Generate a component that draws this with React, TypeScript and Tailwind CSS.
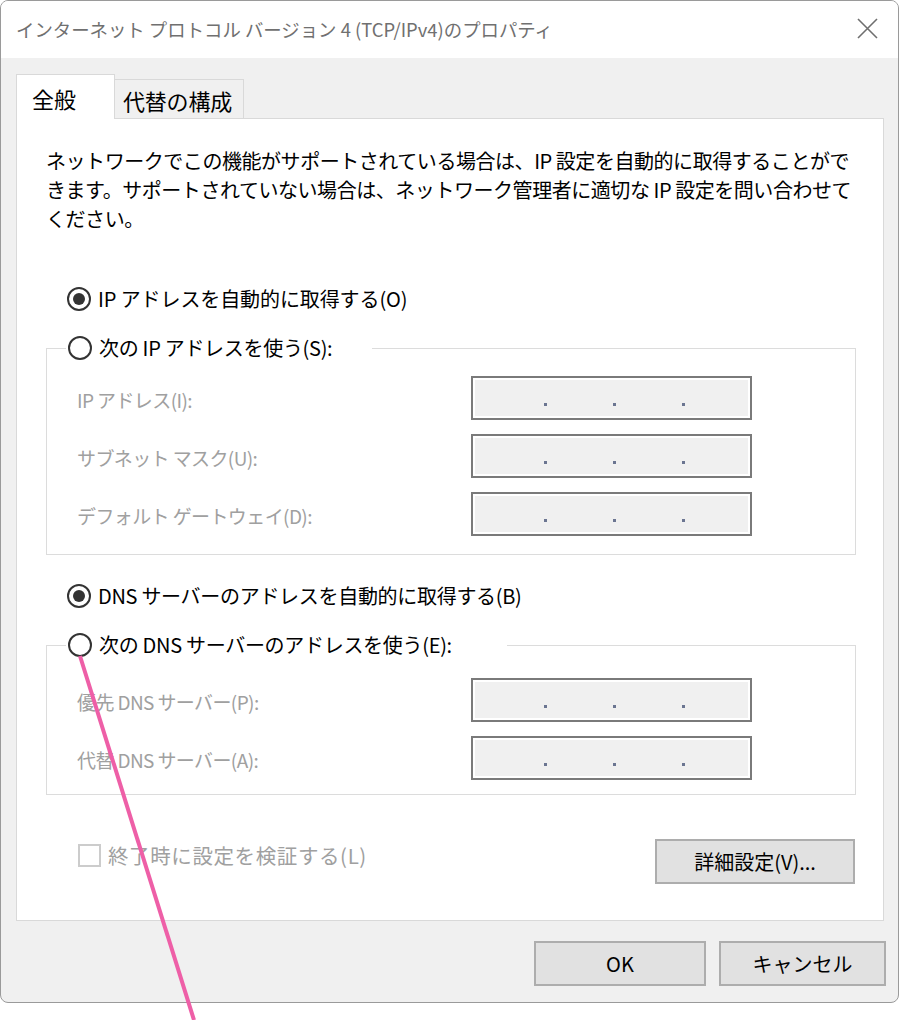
import React from 'react';

const font = "font-['Noto_Sans_CJK_JP','Noto_Sans',sans-serif]";

const Radio: React.FC<{ checked?: boolean }> = ({ checked }) => (
  <span className="w-[24px] h-[24px] shrink-0 rounded-full border-2 border-[#333] bg-white flex items-center justify-center">
    {checked && <span className="w-[12px] h-[12px] rounded-full bg-[#333]" />}
  </span>
);

const IpBox: React.FC = () => (
  <div className="w-[281px] h-[44px] border-2 border-[#7a7a7a] bg-[#f0f0f0] shadow-[inset_0_0_0_2px_#fff] flex items-start pt-[25px] pl-[71px] gap-[66px]">
    <span className="w-[3px] h-[3px] bg-[#6b7591]" />
    <span className="w-[3px] h-[3px] bg-[#6b7591]" />
    <span className="w-[3px] h-[3px] bg-[#6b7591]" />
  </div>
);

const FieldRow: React.FC<{ label: string }> = ({ label }) => (
  <div className="flex items-center pl-[30px]">
    <span className="w-[394px] pt-[4px] text-[19px] text-[#a0a0a0] tracking-[-0.6px] whitespace-nowrap">{label}</span>
    <IpBox />
  </div>
);

const Button: React.FC<{ label: string; className?: string }> = ({ label, className }) => (
  <button
    type="button"
    className={`h-[45px] border-2 border-[#adadad] bg-[#e1e1e1] text-[20px] text-black flex items-center justify-center ${className ?? ''}`}
  >
    {label}
  </button>
);

export default function App() {
  return (
    <div className={`relative w-[900px] h-[1020px] bg-white ${font}`}>
      {/* Dialog */}
      <div className="w-[899px] h-[1003px] border border-[#9a9a9a] rounded-[8px] overflow-hidden flex flex-col bg-[#f0f0f0]">
        {/* Title bar */}
        <div className="h-[57px] shrink-0 bg-white flex items-start justify-between pl-[15px] pr-[20px]">
          <span className="mt-[15px] text-[18.4px] text-[#707070] whitespace-nowrap">
            インターネット プロトコル バージョン 4 (TCP/IPv4)のプロパティ
          </span>
          <svg className="mt-[17px]" width="21" height="21" viewBox="0 0 21 21">
            <path d="M1 1 L20 20 M20 1 L1 20" stroke="#6f6f6f" strokeWidth="1.6" fill="none" />
          </svg>
        </div>

        {/* Body */}
        <div className="flex-1 pt-[16px] text-black">
          {/* Tabs */}
          <div className="relative z-10 flex items-end ml-[15px] -mb-px">
            <div className="h-[45px] w-[99px] border border-b-0 border-[#d9d9d9] bg-white pl-[15px] pt-[7px] text-[22px]">
              全般
            </div>
            <div className="h-[40px] w-[129px] border border-l-0 border-[#d9d9d9] bg-[#f0f0f0] pl-[8px] pt-[4px] text-[22px] tracking-[-0.2px] whitespace-nowrap">
              代替の構成
            </div>
          </div>

          {/* Panel */}
          <div className="ml-[15px] w-[868px] h-[803px] border border-[#d9d9d9] bg-white pl-[29px] pt-[27px]">
            <p className="text-[20px] leading-[29px] tracking-[-0.45px] whitespace-nowrap">
              ネットワークでこの機能がサポートされている場合は、IP 設定を自動的に取得することがで
              <br />
              きます。サポートされていない場合は、ネットワーク管理者に適切な IP 設定を問い合わせて
              <br />
              ください。
            </p>

            <div className="mt-[50px] h-[32px] flex items-center gap-[7px] pl-[21px] text-[20px] tracking-[-0.1px]">
              <Radio checked />
              <span>IP アドレスを自動的に取得する(O)</span>
            </div>

            <fieldset className="mt-[17px] w-[810px] border border-[#dcdcdc] pb-[18px]">
              <legend className="ml-[19px] w-[306px] h-[32px] flex items-center gap-[7px] pl-[2px] text-[20px] tracking-[-0.3px]">
                <Radio />
                <span>次の IP アドレスを使う(S):</span>
              </legend>
              <div className="pt-[12px] flex flex-col gap-[14px]">
                <FieldRow label="IP アドレス(I):" />
                <FieldRow label="サブネット マスク(U):" />
                <FieldRow label="デフォルト ゲートウェイ(D):" />
              </div>
            </fieldset>

            <div className="mt-[25px] h-[32px] flex items-center gap-[7px] pl-[21px] text-[20px] tracking-[-0.3px]">
              <Radio checked />
              <span>DNS サーバーのアドレスを自動的に取得する(B)</span>
            </div>

            <fieldset className="mt-[17px] w-[810px] border border-[#dcdcdc] pb-[14px]">
              <legend className="ml-[19px] w-[441px] h-[32px] flex items-center gap-[7px] pl-[2px] text-[20px] tracking-[-0.3px]">
                <Radio />
                <span>次の DNS サーバーのアドレスを使う(E):</span>
              </legend>
              <div className="pt-[17px] flex flex-col gap-[14px]">
                <FieldRow label="優先 DNS サーバー(P):" />
                <FieldRow label="代替 DNS サーバー(A):" />
              </div>
            </fieldset>

            <div className="mt-[44px] w-[809px] flex items-start justify-between">
              <div className="flex items-center gap-[7px] pl-[32px] pt-[1px]">
                <span className="w-[23px] h-[23px] border-2 border-[#cccccc] bg-white" />
                <span className="text-[20.5px] text-[#a0a0a0] tracking-[0.6px]">終了時に設定を検証する(L)</span>
              </div>
              <Button label="詳細設定(V)..." className="w-[200px]" />
            </div>
          </div>

          {/* Footer */}
          <div className="mt-[20px] flex justify-end gap-[13px] pr-[12px]">
            <Button label="OK" className="w-[172px]" />
            <Button label="キャンセル" className="w-[167px]" />
          </div>
        </div>
      </div>

      {/* Annotation line */}
      <svg className="absolute top-0 left-0 pointer-events-none" width="900" height="1020" viewBox="0 0 900 1020">
        <line x1="80" y1="656" x2="194" y2="1020" stroke="#ee5fa7" strokeWidth="4" />
      </svg>
    </div>
  );
}
